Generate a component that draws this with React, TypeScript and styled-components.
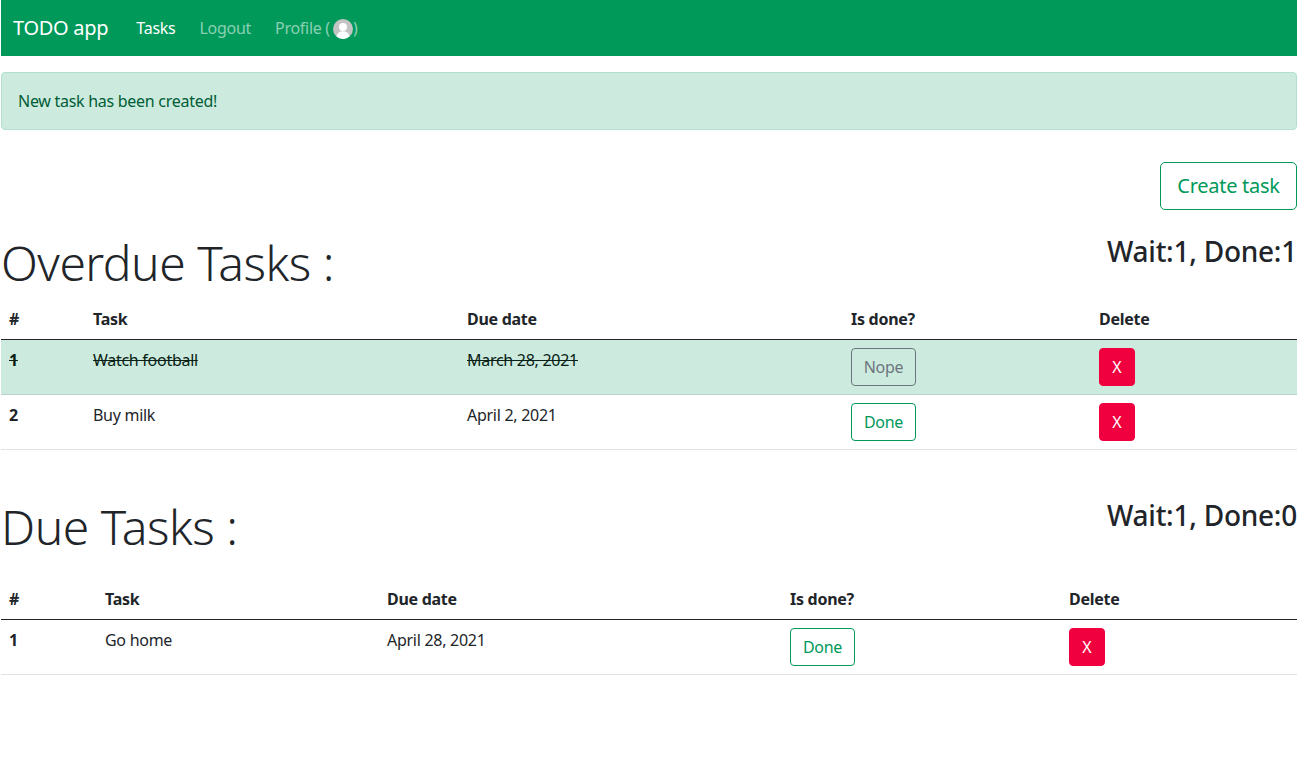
import React from "react";
import styled, { createGlobalStyle } from "styled-components";

const GREEN = "#00995a";
const DARK = "#212529";
const FONT = `"Noto Sans", "Open Sans", sans-serif`;

type Task = { id: number; title: string; due: string; done: boolean };

const overdue: Task[] = [
    { id: 1, title: "Watch football", due: "March 28, 2021", done: true },
    { id: 2, title: "Buy milk", due: "April 2, 2021", done: false },
];

const due: Task[] = [{ id: 1, title: "Go home", due: "April 28, 2021", done: false }];

const overdueColumns = ["84px", "374px", "384px", "248px", "206px"];
const dueColumns = ["96px", "282px", "403px", "279px", "236px"];

const TaskTable = ({ tasks, columns }: { tasks: Task[]; columns: string[] }) => (
    <Table>
        <colgroup>
            {columns.map((width, i) => (
                <col key={i} style={{ width }} />
            ))}
        </colgroup>
        <thead>
            <tr>
                <Th>#</Th>
                <Th>Task</Th>
                <Th>Due date</Th>
                <Th>Is done?</Th>
                <Th>Delete</Th>
            </tr>
        </thead>
        <tbody>
            {tasks.map((task) => (
                <Row key={task.id} $done={task.done}>
                    <Td $bold $done={task.done}>{task.id}</Td>
                    <Td $done={task.done}>{task.title}</Td>
                    <Td $done={task.done}>{task.due}</Td>
                    <Td>
                        <StatusButton $done={task.done}>{task.done ? "Nope" : "Done"}</StatusButton>
                    </Td>
                    <Td>
                        <DeleteButton>X</DeleteButton>
                    </Td>
                </Row>
            ))}
        </tbody>
    </Table>
);

const Avatar = () => (
    <AvatarSvg viewBox="0 0 20 20" aria-hidden="true">
        <circle cx="10" cy="10" r="10" fill="#c4c4c4" />
        <circle cx="10" cy="8" r="4" fill="#fff" />
        <path d="M3.5 17.5c.6-3.6 3-5.300 6.500-5.300s5.900 1.700 6.500 5.300A10 10 0 0 1 10 20a10 10 0 0 1-6.500-2.500z" fill="#fff" />
    </AvatarSvg>
);

const App = () => (
    <Page>
        <GlobalStyle />
        <Navbar>
            <Brand>TODO app</Brand>
            <NavLink $active>Tasks</NavLink>
            <NavLink>Logout</NavLink>
            <NavLink>
                Profile (<Avatar />)
            </NavLink>
        </Navbar>
        <Alert>New task has been created!</Alert>
        <Actions>
            <CreateButton>Create task</CreateButton>
        </Actions>
        <Section>
            <SectionHeader>
                <Title>Overdue Tasks :</Title>
                <Count>Wait:1, Done:1</Count>
            </SectionHeader>
            <TaskTable tasks={overdue} columns={overdueColumns} />
        </Section>
        <Section $second>
            <SectionHeader $second>
                <Title>Due Tasks :</Title>
                <Count>Wait:1, Done:0</Count>
            </SectionHeader>
            <TaskTable tasks={due} columns={dueColumns} />
        </Section>
    </Page>
);

export default App;

const GlobalStyle = createGlobalStyle`
    html, body {
        margin: 0;
        padding: 0;
        background: #fff;
    }
    body {
        font-family: ${FONT};
        font-size: 16px;
        line-height: 24px;
        letter-spacing: -0.28px;
        color: ${DARK};
    }
    * {
        box-sizing: border-box;
    }
`;

const Page = styled.div`
    width: 1296px;
    margin-left: 1px;
`;

const Navbar = styled.nav`
    height: 56px;
    background: ${GREEN};
    display: flex;
    align-items: center;
    padding-left: 12px;
`;

const Brand = styled.a`
    font-size: 20px;
    line-height: 30px;
    color: #fff;
    margin-right: 16px;
    padding: 5px 0;
`;

const NavLink = styled.a<{ $active?: boolean }>`
    display: flex;
    align-items: center;
    padding: 8px 12px;
    color: ${(p) => (p.$active ? "#fff" : "rgba(255, 255, 255, 0.55)")};
`;

const AvatarSvg = styled.svg`
    width: 20px;
    height: 20px;
    margin: 2px 0 0 3px;
`;

const Alert = styled.div`
    margin-top: 16px;
    height: 58px;
    padding: 16px;
    background: #ccebde;
    border: 1px solid #b3e0ce;
    border-radius: 4px;
    color: #005c36;
`;

const Actions = styled.div`
    display: flex;
    justify-content: flex-end;
    margin-top: 32px;
`;

const CreateButton = styled.button`
    height: 48px;
    width: 137px;
    padding: 0 0 2px;
    background: #fff;
    border: 1px solid ${GREEN};
    border-radius: 5px;
    color: ${GREEN};
    font-family: ${FONT};
    font-size: 20px;
    letter-spacing: -0.28px;
`;

const Section = styled.section<{ $second?: boolean }>`
    margin-top: ${(p) => (p.$second ? "48px" : "24px")};
`;

const SectionHeader = styled.div<{ $second?: boolean }>`
    display: flex;
    justify-content: space-between;
    align-items: flex-start;
    height: ${(p) => (p.$second ? "81px" : "65px")};
`;

const Title = styled.h1`
    margin: 0;
    font-size: 48px;
    font-weight: 300;
    line-height: 58px;
    letter-spacing: -0.5px;
`;

const Count = styled.h3`
    margin: 0;
    font-size: 28px;
    font-weight: 500;
    line-height: 34px;
    letter-spacing: -0.25px;
`;

const Table = styled.table`
    width: 100%;
    table-layout: fixed;
    border-collapse: collapse;
`;

const Th = styled.th`
    height: 40px;
    padding: 8px;
    text-align: left;
    font-weight: 700;
    border-bottom: 1px solid ${DARK};
`;

const Row = styled.tr<{ $done: boolean }>`
    background: ${(p) => (p.$done ? "#ccebde" : "transparent")};
    border-bottom: 1px solid ${(p) => (p.$done ? "#b8d4c8" : "#dee2e6")};
`;

const Td = styled.td<{ $bold?: boolean; $done?: boolean }>`
    height: 55px;
    padding: 8px;
    vertical-align: top;
    font-weight: ${(p) => (p.$bold ? 700 : 400)};
    text-decoration: ${(p) => (p.$done ? "line-through" : "none")};
    color: ${(p) => (p.$done ? "#0a1f16" : DARK)};
`;

const StatusButton = styled.button<{ $done: boolean }>`
    display: block;
    height: 38px;
    width: 65px;
    padding: 0;
    background: transparent;
    border: 1px solid ${(p) => (p.$done ? "#6c757d" : GREEN)};
    border-radius: 4px;
    color: ${(p) => (p.$done ? "#6c757d" : GREEN)};
    font-family: ${FONT};
    font-size: 16px;
    letter-spacing: -0.28px;
`;

const DeleteButton = styled.button`
    display: block;
    height: 38px;
    width: 36px;
    padding: 0;
    background: #f0003f;
    border: 1px solid #f0003f;
    border-radius: 4px;
    color: #fff;
    font-family: ${FONT};
    font-size: 16px;
`;
